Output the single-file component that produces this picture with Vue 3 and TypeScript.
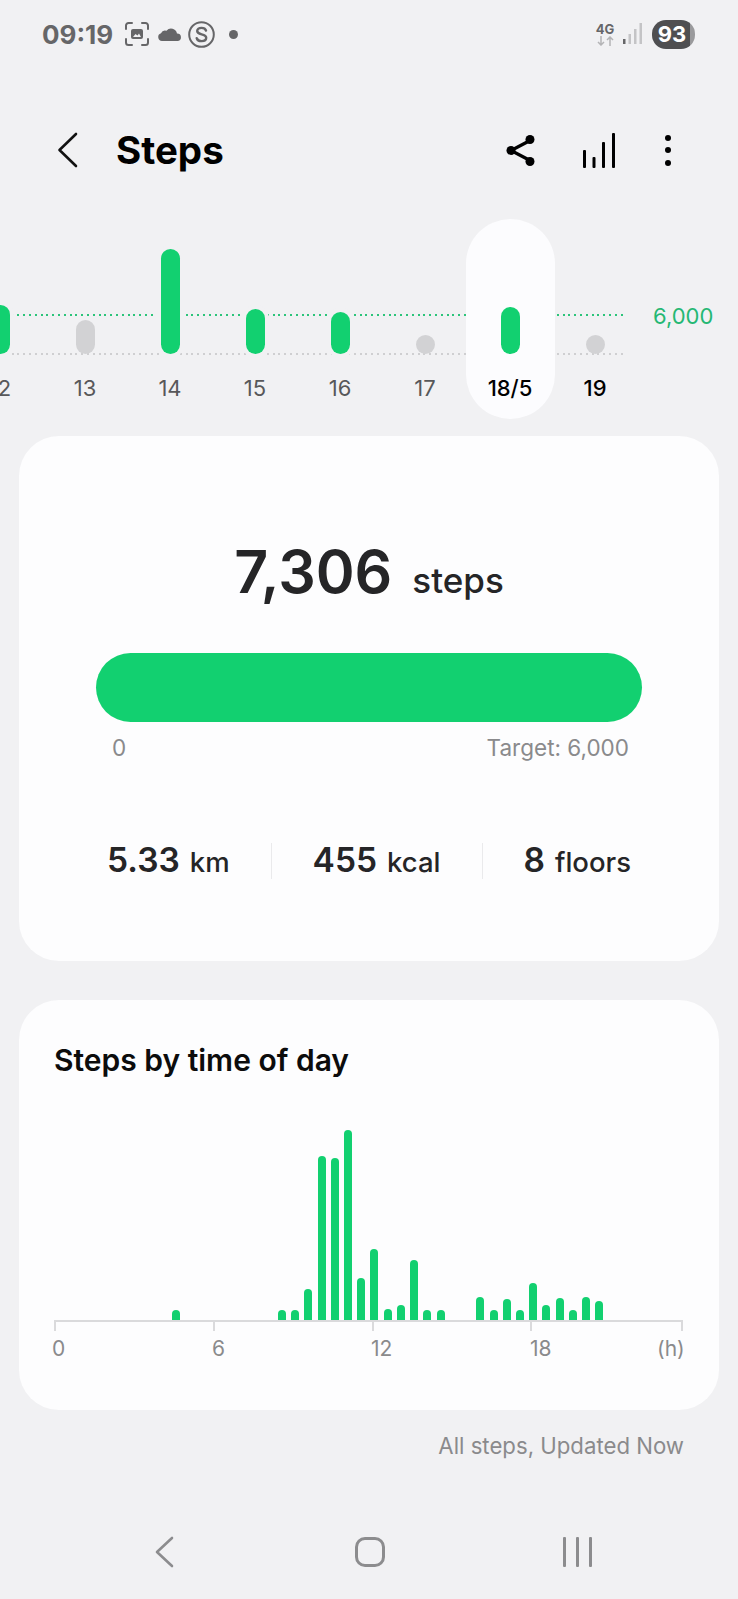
<script setup lang="ts">
// 일별 걸음 막대 (높이 px, 목표 미달이면 회색)
interface Day {
  label: string;
  height: number;
  done: boolean;
  selected?: boolean;
  today?: boolean;
}

const days: Day[] = [
  { label: '12', height: 49, done: true },
  { label: '13', height: 34, done: false },
  { label: '14', height: 105, done: true },
  { label: '15', height: 45, done: true },
  { label: '16', height: 42, done: true },
  { label: '17', height: 19, done: false },
  { label: '18/5', height: 47, done: true, selected: true },
  { label: '19', height: 19, done: false, today: true },
];

// 30분 단위 48칸, 값은 막대 높이(px)
const slots: number[] = Array(48).fill(0);
const filled: Record<number, number> = {
  9: 10, 17: 10, 18: 10, 19: 31, 20: 164, 21: 162, 22: 190, 23: 42, 24: 71,
  25: 11, 26: 15, 27: 60, 28: 10, 29: 10, 32: 23, 33: 10, 34: 21, 35: 10,
  36: 37, 37: 15, 38: 22, 39: 10, 40: 23, 41: 19,
};
Object.keys(filled).forEach((k) => {
  slots[Number(k)] = filled[Number(k)];
});

const ticks = ['0', '6', '12', '18'];
</script>

<template>
  <div class="page">
    <div class="status">
      <span class="clock">09:19</span>
      <svg class="st-shot" width="24" height="24" viewBox="0 0 24 24" fill="none">
        <path d="M1 7V3.5A2.5 2.5 0 0 1 3.5 1H7M17 1h3.5A2.5 2.5 0 0 1 23 3.5V7M23 17v3.5a2.5 2.5 0 0 1-2.500 2.500H17M7 23H3.500A2.500 2.500 0 0 1 1 20.500V17" stroke="#666668" stroke-width="2" stroke-linecap="round" />
        <rect x="6" y="7" width="12" height="10" rx="2" fill="#666668" />
        <path d="M8 15l2.500-3 2 1.500 1.500-2 2 3.500z" fill="#f1f1f3" />
      </svg>
      <svg class="st-cloud" width="25" height="14" viewBox="0 0 25 14">
        <path d="M5 14a4 4 0 0 1-1-7.800 4.500 4.500 0 0 1 5.500-2.400A6 6 0 0 1 20 6.500 3.800 3.800 0 0 1 21 14z" fill="#666668" />
      </svg>
      <svg class="st-s" width="27" height="27" viewBox="0 0 27 27" fill="none">
        <circle cx="13.500" cy="13.500" r="12.300" stroke="#666668" stroke-width="2" />
        <path d="M18 9.500c-.6-1.800-2.300-2.600-4.500-2.600-2.500 0-4.300 1.200-4.300 3.200 0 4.300 9 2.200 9 6.700 0 2.100-2 3.300-4.600 3.300-2.500 0-4.400-1-4.900-3" stroke="#666668" stroke-width="2.400" stroke-linecap="round" />
      </svg>
      <span class="st-dot"></span>

      <div class="status-right">
        <div class="net">
          <span class="net-label">4G</span>
          <svg width="17" height="10" viewBox="0 0 17 10" fill="none">
            <path d="M4 0v9M1 6l3 3 3-3" stroke="#b4b4b6" stroke-width="1.500" />
            <path d="M13 10V1M10 4l3-3 3 3" stroke="#b4b4b6" stroke-width="1.500" />
          </svg>
        </div>
        <svg class="signal" width="19" height="21" viewBox="0 0 19 21">
          <rect x="0" y="16" width="2.500" height="5" fill="#666668" />
          <rect x="5.500" y="11" width="2.500" height="10" fill="#c4c4c6" />
          <rect x="11" y="6" width="2.500" height="15" fill="#c4c4c6" />
          <rect x="16.500" y="0" width="2.500" height="21" fill="#c4c4c6" />
        </svg>
        <div class="battery">93</div>
      </div>
    </div>

    <header class="header">
      <svg class="back" width="21" height="36" viewBox="0 0 21 36" fill="none">
        <path d="M19 2L2.500 18 19 34" stroke="#111" stroke-width="2.600" stroke-linecap="round" stroke-linejoin="round" />
      </svg>
      <h1 class="title">Steps</h1>
      <div class="actions">
        <svg width="30" height="33" viewBox="0 0 30 33" fill="none">
          <path d="M25 6L5 16.500 25 27" stroke="#000" stroke-width="3.400" />
          <circle cx="24" cy="5.500" r="4.500" fill="#000" />
          <circle cx="5" cy="16.500" r="4.500" fill="#000" />
          <circle cx="24" cy="27.500" r="4.500" fill="#000" />
        </svg>
        <svg class="chart-ic" width="32" height="35" viewBox="0 0 32 35">
          <rect x="0" y="17" width="3" height="18" rx="1" fill="#000" />
          <rect x="9.500" y="24" width="3" height="11" rx="1" fill="#000" />
          <rect x="19" y="9" width="3" height="26" rx="1" fill="#000" />
          <rect x="29" y="0" width="3" height="35" rx="1" fill="#000" />
        </svg>
        <div class="more"><i></i><i></i><i></i></div>
      </div>
    </header>

    <section class="strip">
      <div class="plot">
        <div class="line line-goal"></div>
        <div class="line line-base"></div>
        <div class="days">
          <div v-for="d in days" :key="d.label" :class="['day', { selected: d.selected }]">
            <div class="bar-area">
              <div
                :class="['day-bar', d.done ? 'is-done' : 'is-miss']"
                :style="{ height: d.height + 'px' }"
              ></div>
            </div>
            <span :class="['day-label', { strong: d.selected || d.today }]">{{ d.label }}</span>
          </div>
        </div>
      </div>
      <span class="goal">6,000</span>
    </section>

    <section class="card summary">
      <div class="total">
        <span class="total-num">7,306</span>
        <span class="total-unit">steps</span>
      </div>
      <div class="progress"></div>
      <div class="progress-labels">
        <span>0</span>
        <span>Target: 6,000</span>
      </div>
      <div class="stats">
        <div class="stat"><b>5.33</b><span>km</span></div>
        <div class="stat"><b>455</b><span>kcal</span></div>
        <div class="stat"><b>8</b><span>floors</span></div>
      </div>
    </section>

    <section class="card hourly">
      <h2 class="hourly-title">Steps by time of day</h2>
      <div class="hours">
        <div v-for="(h, i) in slots" :key="i" class="slot">
          <div v-if="h" class="hour-bar" :style="{ height: h + 'px' }"></div>
        </div>
      </div>
      <div class="axis">
        <i v-for="n in 5" :key="n"></i>
      </div>
      <div class="axis-labels">
        <span v-for="t in ticks" :key="t">{{ t }}</span>
        <span class="unit">(h)</span>
      </div>
    </section>

    <p class="updated">All steps, Updated Now</p>

    <nav class="nav">
      <svg width="19" height="32" viewBox="0 0 19 32" fill="none">
        <path d="M17 2L2 16l15 14" stroke="#8c8c8e" stroke-width="2.600" stroke-linecap="round" stroke-linejoin="round" />
      </svg>
      <div class="nav-home"></div>
      <div class="nav-recent"><i></i><i></i><i></i></div>
    </nav>
  </div>
</template>

<style>
html,
body {
  margin: 0;
  background: #f1f1f3;
  overflow: hidden;
}
</style>

<style scoped>
.page {
  width: 738px;
  height: 1599px;
  display: flex;
  flex-direction: column;
  background: #f1f1f3;
  font-family: Inter, "Liberation Sans", sans-serif;
  overflow: hidden;
}

/* 상태바 */
.status {
  height: 68px;
  display: flex;
  align-items: center;
  padding: 0 43px 0 42px;
  box-sizing: border-box;
}
.clock {
  width: 83px;
  font-size: 26px;
  font-weight: 700;
  color: #666668;
}
.st-cloud {
  margin-left: 8px;
}
.st-s {
  margin-left: 6px;
}
.st-dot {
  width: 9px;
  height: 9px;
  margin-left: 14px;
  border-radius: 50%;
  background: #666668;
}
.status-right {
  margin-left: auto;
  display: flex;
  align-items: center;
}
.net {
  display: flex;
  flex-direction: column;
  align-items: center;
  width: 18px;
}
.net-label {
  font-size: 13px;
  line-height: 13px;
  font-weight: 700;
  color: #666668;
}
.signal {
  margin-left: 9px;
  margin-top: -2px;
}
.battery {
  width: 43px;
  height: 29px;
  margin-left: 10px;
  margin-right: 0;
  border-radius: 14px;
  background: linear-gradient(90deg, #4f4f51 88%, #9a9a9c 88%);
  color: #fff;
  font-size: 22px;
  font-weight: 700;
  line-height: 29px;
  text-align: center;
  padding-right: 3px;
  box-sizing: border-box;
}

/* 헤더 */
.header {
  height: 60px;
  margin-top: 52px;
  display: flex;
  align-items: center;
  padding: 0 67px 0 57px;
}
.title {
  margin: 0 0 0 38px;
  font-size: 38.500px;
  font-weight: 700;
  color: #000;
}
.actions {
  margin-left: auto;
  display: flex;
  align-items: center;
}
.chart-ic {
  margin-left: 47px;
}
.more {
  margin-left: 50px;
  display: flex;
  flex-direction: column;
  gap: 6.500px;
}
.more i {
  width: 6px;
  height: 6px;
  border-radius: 50%;
  background: #000;
}

/* 일별 차트 */
.strip {
  margin-top: 39px;
  height: 200px;
  display: flex;
  align-items: flex-start;
}
.plot {
  position: relative;
  width: 624px;
  height: 200px;
  flex: none;
}
.line {
  position: absolute;
  left: 0;
  right: 0;
  height: 2px;
}
.line-goal {
  top: 95px;
  background: repeating-linear-gradient(90deg, #2cc47a 0 2px, transparent 2px 5.800px);
}
.line-base {
  top: 134px;
  background: repeating-linear-gradient(90deg, #cfcfd1 0 2px, transparent 2px 5.800px);
}
.days {
  position: relative;
  display: flex;
  margin-left: -42.500px;
}
.day {
  width: 85px;
  height: 200px;
  flex: none;
  display: flex;
  flex-direction: column;
  align-items: center;
  position: relative;
}
.day.selected::before {
  content: '';
  position: absolute;
  top: 0;
  bottom: 0;
  left: -2px;
  right: -2px;
  border-radius: 45px;
  background: #fcfcfe;
}
.bar-area {
  position: relative;
  height: 135px;
  display: flex;
  align-items: flex-end;
}
.day-bar {
  width: 19px;
  border-radius: 10px;
}
.day-bar.is-done {
  background: #12d070;
  box-shadow: 0 0 0 4px #f1f1f3;
}
.day.selected .day-bar.is-done {
  box-shadow: none;
}
.day-bar.is-miss {
  background: #d2d2d4;
}
.day-label {
  position: relative;
  margin-top: 21px;
  font-size: 22px;
  line-height: 27px;
  color: #58585a;
}
.day-label.strong {
  color: #000;
  font-weight: 500;
}
.goal {
  margin: 84px 0 0 29px;
  font-size: 22px;
  line-height: 27px;
  color: #25b873;
}

/* 카드 */
.card {
  margin: 0 19px;
  background: #fdfdfe;
  border-radius: 40px;
  flex: none;
}
.summary {
  margin-top: 17px;
  height: 525px;
  padding: 98px 77px 0;
  box-sizing: border-box;
}
.total {
  display: flex;
  justify-content: center;
  align-items: baseline;
  gap: 20px;
  color: #252527;
}
.total-num {
  font-size: 59px;
  line-height: 76px;
  font-weight: 600;
}
.total-unit {
  font-size: 35px;
  font-weight: 500;
}
.progress {
  margin-top: 43px;
  height: 69px;
  border-radius: 35px;
  background: #12d070;
}
.progress-labels {
  display: flex;
  justify-content: space-between;
  padding: 12px 13px 0 16px;
  font-size: 22.500px;
  line-height: 27px;
  color: #8a8a8c;
}
.stats {
  margin-top: 82px;
  display: flex;
  justify-content: center;
  align-items: baseline;
  white-space: nowrap;
}
.stat {
  display: flex;
  align-items: baseline;
  gap: 10px;
  padding: 0 41px;
  line-height: 34px;
  color: #252527;
  border-left: 1px solid #eaeaec;
}
.stat:first-child {
  border-left: none;
}
.stat b {
  font-size: 33.500px;
  font-weight: 600;
}
.stat span {
  font-size: 27.500px;
  font-weight: 500;
}

.hourly {
  margin-top: 39px;
  height: 410px;
  padding: 43px 35px 0;
  box-sizing: border-box;
}
.hourly-title {
  margin: 0;
  font-size: 30px;
  line-height: 35px;
  font-weight: 600;
  color: #0c0c0c;
}
.hours {
  height: 200px;
  margin: 42px 0 0 -3.800px;
  display: flex;
  align-items: flex-end;
}
.slot {
  width: 13.240px;
  flex: none;
  display: flex;
  justify-content: center;
}
.hour-bar {
  width: 8px;
  border-radius: 4px 4px 0 0;
  background: #12d070;
}
.axis {
  display: grid;
  grid-template-columns: 159px 159px 158px 151px 2px;
  border-top: 2px solid #dadadc;
  box-sizing: border-box;
  height: 11px;
  margin-right: 1px;
}
.axis i {
  width: 2px;
  background: #dadadc;
}
.axis-labels {
  display: grid;
  grid-template-columns: 160px 159px 159px 127px 1fr;
  margin: 5px 0 0 -2px;
  font-size: 21px;
  line-height: 26px;
  color: #8a8a8c;
}
.axis-labels .unit {
  text-align: right;
  white-space: nowrap;
}

.updated {
  margin: 22px 54px 0 0;
  text-align: right;
  font-size: 22.200px;
  line-height: 27px;
  color: #8a8a8c;
}

/* 하단 내비게이션 */
.nav {
  margin-top: 77px;
  height: 32px;
  display: flex;
  align-items: center;
  padding: 0 146px 0 155px;
  justify-content: space-between;
}
.nav-home {
  width: 30px;
  height: 30px;
  margin-left: 2px;
  border: 3px solid #8c8c8e;
  border-radius: 10px;
  box-sizing: border-box;
}
.nav-recent {
  display: flex;
  gap: 10px;
}
.nav-recent i {
  width: 3px;
  height: 30px;
  border-radius: 1px;
  background: #8c8c8e;
}
</style>
